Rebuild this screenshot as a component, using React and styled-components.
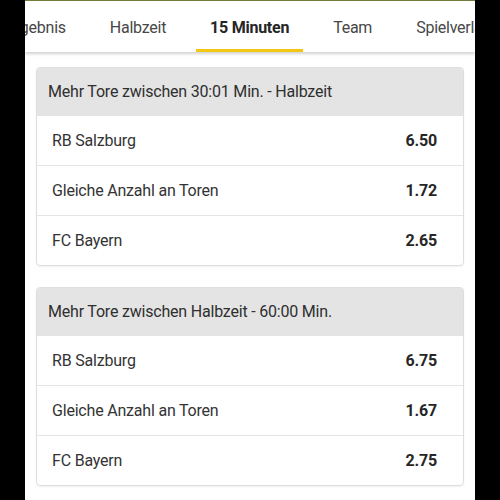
import React, { useLayoutEffect, useRef } from 'react'
import styled, { createGlobalStyle } from 'styled-components'

const tabs = ['Ergebnis', 'Halbzeit', '15 Minuten', 'Team', 'Spielverlauf']

const markets = [
  {
    title: 'Mehr Tore zwischen 30:01 Min. - Halbzeit',
    rows: [
      ['RB Salzburg', '6.50'],
      ['Gleiche Anzahl an Toren', '1.72'],
      ['FC Bayern', '2.65'],
    ],
  },
  {
    title: 'Mehr Tore zwischen Halbzeit - 60:00 Min.',
    rows: [
      ['RB Salzburg', '6.75'],
      ['Gleiche Anzahl an Toren', '1.67'],
      ['FC Bayern', '2.75'],
    ],
  },
]

const App = () => {
  const barRef = useRef(null)
  const activeRef = useRef(null)

  // keep the active tab centred, like the app's scrolled tab strip
  useLayoutEffect(() => {
    const bar = barRef.current
    const tab = activeRef.current
    if (bar && tab) {
      bar.scrollLeft = tab.offsetLeft + tab.offsetWidth / 2 - bar.clientWidth / 2
    }
  }, [])

  return (
    <>
      <GlobalStyle />
      <Screen>
        <TabBar ref={barRef}>
          {tabs.map((t) => (
            <Tab
              key={t}
              $active={t === '15 Minuten'}
              ref={t === '15 Minuten' ? activeRef : null}
            >
              {t}
            </Tab>
          ))}
        </TabBar>
        <Content>
          {markets.map((m) => (
            <Card key={m.title}>
              <CardHeader>{m.title}</CardHeader>
              {m.rows.map(([name, odd]) => (
                <Row key={name}>
                  <Name>{name}</Name>
                  <Odd>{odd}</Odd>
                </Row>
              ))}
            </Card>
          ))}
        </Content>
      </Screen>
    </>
  )
}

export default App

const GlobalStyle = createGlobalStyle`
  html, body {
    margin: 0;
    background: #000;
  }
  body {
    font-family: Roboto, "Liberation Sans", sans-serif;
    letter-spacing: -0.2px;
  }
`

const Screen = styled.div`
  width: 450px;
  height: 500px;
  margin: 0 auto;
  background: #fff;
  border-top: 1px solid #6f7d3c;
  box-sizing: border-box;
  overflow: hidden;
`

const TabBar = styled.div`
  display: flex;
  height: 51px;
  overflow-x: auto;
  scrollbar-width: none;
  background: #fff;
  box-shadow: 0 2px 3px rgba(0, 0, 0, 0.18);
  position: relative;
  z-index: 1;
  &::-webkit-scrollbar {
    display: none;
  }
`

const Tab = styled.div`
  flex: none;
  position: relative;
  display: flex;
  align-items: center;
  padding: 1px 22px 0;
  font-size: 16px;
  letter-spacing: -0.25px;
  font-weight: ${(p) => (p.$active ? 700 : 400)};
  color: ${(p) => (p.$active ? '#262626' : '#474747')};
  white-space: nowrap;

  &::after {
    content: '';
    display: ${(p) => (p.$active ? 'block' : 'none')};
    position: absolute;
    left: 8px;
    right: 8px;
    bottom: 0;
    height: 3px;
    background: #f3c614;
  }
`

const Content = styled.div`
  display: flex;
  flex-direction: column;
  gap: 21px;
  padding: 15px 11px;
`

const Card = styled.div`
  border: 1px solid #dedede;
  border-radius: 4px;
  overflow: hidden;
  box-shadow: 0 1px 2px rgba(0, 0, 0, 0.06);
`

const CardHeader = styled.div`
  height: 47px;
  display: flex;
  align-items: center;
  padding-left: 11px;
  background: #e4e4e4;
  font-size: 16px;
  color: #2f2f2f;
`

const Row = styled.div`
  height: 50px;
  box-sizing: border-box;
  display: flex;
  align-items: center;
  justify-content: space-between;
  padding: 0 26px 0 15px;
  border-top: 1px solid #e4e4e4;
  &:first-of-type {
    border-top: none;
  }
`

const Name = styled.span`
  font-size: 16px;
  color: #333;
`

const Odd = styled.span`
  font-size: 16px;
  font-weight: 700;
  color: #262626;
`
